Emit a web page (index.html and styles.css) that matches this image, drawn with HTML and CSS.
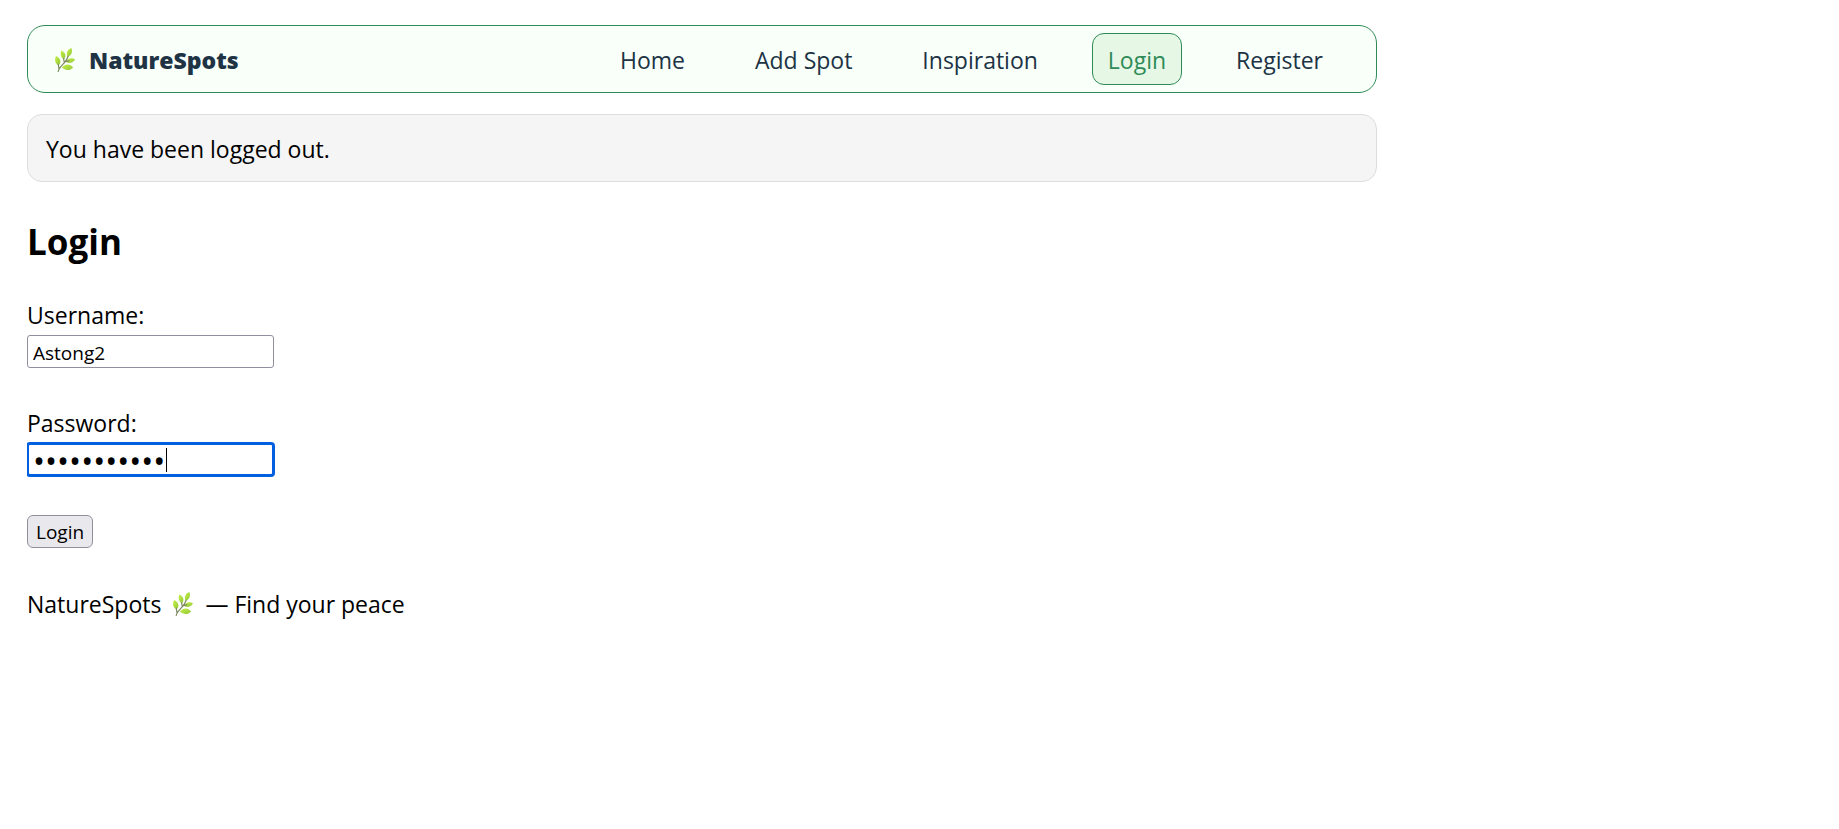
FILE: index.html
```html
<!DOCTYPE html>
<html lang="en">
<head>
<meta charset="utf-8">
<meta name="viewport" content="width=device-width, initial-scale=1">
<title>NatureSpots</title>
<link rel="stylesheet" href="styles.css">
</head>
<body>
<svg class="symbols" aria-hidden="true">
  <defs>
    <linearGradient id="leaf" x1="0" y1="0" x2="1" y2="1">
      <stop offset="0" stop-color="#c9f04e"/>
      <stop offset="1" stop-color="#8fc832"/>
    </linearGradient>
    <symbol id="herb" viewBox="0 0 20 24">
      <g fill="url(#leaf)">
        <path d="M1 8C-.8 11.500-.2 15.500 3.500 17.500C6.800 14.500 5.800 10 1 8Z"/>
        <path d="M6.300 2.600C5 6 5.800 9.600 8.800 11.400C11.800 8.600 10.400 4.400 6.300 2.600Z"/>
        <path d="M16.400 0C12.200 1.600 10.800 5.200 12.600 9C16.600 7.400 17.800 3.800 16.400 0Z"/>
        <path d="M20 11.200C16.300 9.400 12.500 10.400 10.800 13.800C14.300 16.200 18 15 20 11.200Z"/>
        <path d="M18.200 19.400C14.800 15.400 10.200 15.600 6.800 19.600C10.600 23 15 22.600 18.200 19.400Z"/>
      </g>
      <path class="herb-stem" d="M3.200 23.500C4 19.500 7.500 17 9.800 14.200C11.600 12.200 12.400 10.400 13.200 8M3.900 20.300L3.200 16M9.300 14.700L8.600 10.500M10.300 13.600L14 12.800"/>
    </symbol>
  </defs>
</svg>
<div class="page">
  <header class="navbar">
    <a class="brand" href="#">
      <svg class="herb" role="img" aria-label="Herb"><use href="#herb"/></svg>
      <span>NatureSpots</span>
    </a>
    <nav class="links">
      <a class="link" href="#">Home</a>
      <a class="link" href="#">Add Spot</a>
      <a class="link" href="#">Inspiration</a>
      <a class="link active" href="#" aria-current="page">Login</a>
      <a class="link" href="#">Register</a>
    </nav>
  </header>
  <p class="flash">You have been logged out.</p>
  <main>
    <h2 class="title">Login</h2>
    <form class="form">
      <div class="field">
        <label for="username">Username:</label>
        <input class="input" id="username" type="text" value="Astong2">
      </div>
      <div class="field">
        <label for="password">Password:</label>
        <div class="password">
          <input class="input focused" id="password" type="password" value="naturespots">
          <span class="caret"></span>
        </div>
      </div>
      <button class="button" type="submit">Login</button>
    </form>
  </main>
  <footer class="footer">
    <span>NatureSpots</span>
    <svg class="herb" role="img" aria-label="Herb"><use href="#herb"/></svg>
    <span>— Find your peace</span>
  </footer>
</div>
</body>
</html>
```
FILE: styles.css
```css
* {
  box-sizing: border-box;
}

body {
  margin: 25px 27px;
  background: #fff;
  color: #000;
  font: 23px/32px "Segoe UI", "Open Sans", "Noto Sans", sans-serif;
}

.symbols {
  position: absolute;
  width: 0;
  height: 0;
}

.page {
  max-width: 1350px;
}

.navbar {
  display: flex;
  align-items: center;
  justify-content: space-between;
  padding: 7px 37px 7px 27px;
  border: 1px solid #2e8b57;
  border-radius: 18px;
  background: #f9fff9;
}

.brand {
  display: flex;
  align-items: center;
  gap: 14px;
  padding-top: 1px;
  color: #203345;
  font-weight: 800;
  text-decoration: none;
}

.herb {
  width: 20px;
  height: 24px;
}

.herb-stem {
  fill: none;
  stroke: #7d8a62;
  stroke-width: 1.2;
  stroke-linecap: round;
}

.links {
  display: flex;
  gap: 38px;
}

.link {
  padding: 10px 15px 8px;
  border: 1px solid transparent;
  border-radius: 12px;
  color: #203345;
  text-decoration: none;
}

.active {
  border-color: #2e8b57;
  background: #e6f7e6;
  color: #2e8b57;
}

.flash {
  margin: 21px 0 0;
  padding: 18px 18px 16px;
  border: 1px solid #ddd;
  border-radius: 15px;
  background: #f5f5f5;
}

.title {
  margin: 36px 0 0;
  font-size: 35px;
  line-height: 48px;
}

.form {
  display: flex;
  flex-direction: column;
  align-items: flex-start;
  gap: 39px;
  margin-top: 33px;
}

.field {
  display: flex;
  flex-direction: column;
  gap: 4px;
}

.input,
.button {
  height: 33px;
  border: 1px solid #8f8f9d;
  color: #000;
  font: 19px/27px "Segoe UI", "Open Sans", "Noto Sans", sans-serif;
}

.input {
  display: block;
  width: 247px;
  padding: 2px 5px 0;
  border-radius: 3px;
  background: #fff;
}

.input[type="password"] {
  font-size: 32px;
}

.focused,
.input:focus {
  border-color: #0060df;
  outline: 3px solid #0060df;
  outline-offset: -2px;
}

.password {
  position: relative;
}

.caret {
  position: absolute;
  top: 5px;
  left: 139px;
  width: 1px;
  height: 24px;
  background: #000;
}

.button {
  padding: 2px 8px 0;
  border-radius: 6px;
  background: #e9e9ed;
}

.footer {
  display: flex;
  align-items: center;
  gap: 12px;
  margin-top: 40px;
}
```
